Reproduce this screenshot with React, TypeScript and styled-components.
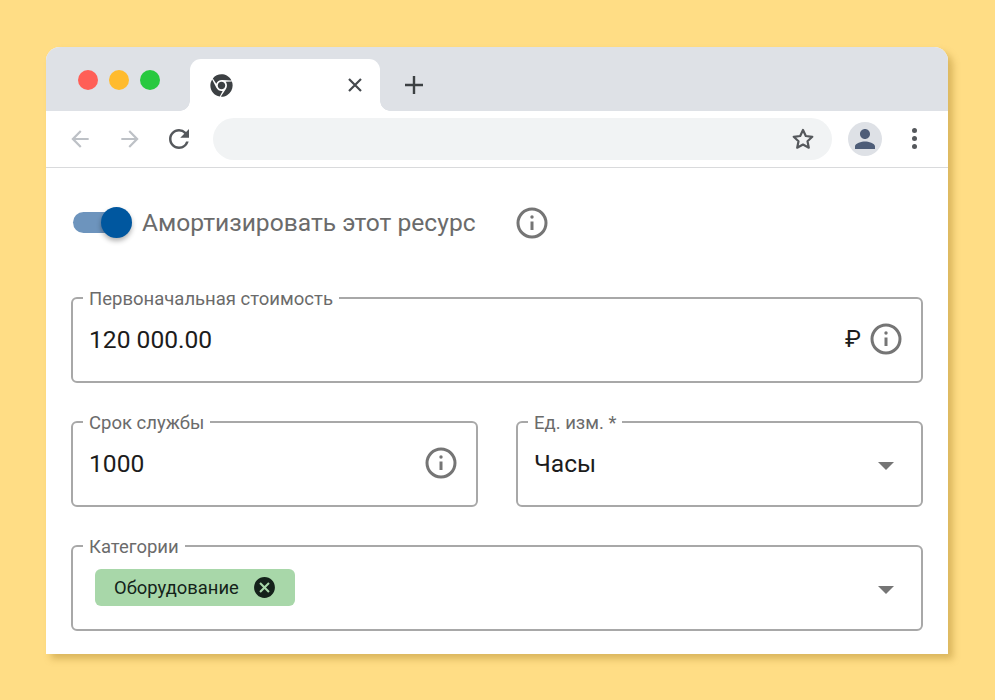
import React from "react"
import styled, { createGlobalStyle } from "styled-components"
import { FaChrome } from "react-icons/fa"
import {
  MdArrowBack,
  MdArrowForward,
  MdCancel,
  MdPerson,
  MdRefresh,
} from "react-icons/md"

const GlobalStyle = createGlobalStyle`
  html, body {
    margin: 0;
    height: 100%;
    background: #ffdd85;
  }
  * {
    box-sizing: border-box;
  }
`

const Page = styled.div`
  width: 995px;
  height: 700px;
  padding: 47px 0 0 46px;
  overflow: hidden;
  font-family: Roboto, "Liberation Sans", sans-serif;
`

const Window = styled.div`
  width: 902px;
  height: 607px;
  border-radius: 14px 14px 0 0;
  background: #fff;
  box-shadow: 5px 5px 7px rgba(150, 110, 20, 0.35);
`

const TabStrip = styled.div`
  height: 64px;
  padding: 12px 0 0 32px;
  display: flex;
  border-radius: 14px 14px 0 0;
  background: #dee1e6;
`

const Lights = styled.div`
  height: 42px;
  display: flex;
  align-items: center;
  gap: 11px;
`

const Light = styled.span<{ $color: string }>`
  width: 20px;
  height: 20px;
  border-radius: 50%;
  background: ${props => props.$color};
`

const Tab = styled.div`
  position: relative;
  width: 190px;
  height: 52px;
  margin-left: 30px;
  padding: 0 15px 0 20px;
  display: flex;
  align-items: center;
  justify-content: space-between;
  border-radius: 11px 11px 0 0;
  background: #fff;

  &::before,
  &::after {
    content: "";
    position: absolute;
    bottom: 0;
    width: 10px;
    height: 10px;
  }
  &::before {
    left: -10px;
    background: radial-gradient(circle at 0 0, #dee1e6 9.5px, #fff 10px);
  }
  &::after {
    right: -10px;
    background: radial-gradient(circle at 100% 0, #dee1e6 9.5px, #fff 10px);
  }
`

const TabLogo = styled(FaChrome)`
  width: 23px;
  height: 23px;
  color: #3c4043;
`

const TabClose = styled.svg`
  width: 20px;
  height: 20px;
  stroke: #45494e;
  stroke-width: 2.2;
`

const NewTab = styled.svg`
  width: 20px;
  height: 20px;
  margin: 16px 0 0 24px;
  stroke: #3c4043;
  stroke-width: 2.4;
`

const Toolbar = styled.div`
  height: 57px;
  padding: 0 0 1px 21px;
  display: flex;
  align-items: center;
  border-bottom: 1px solid #d9dadc;
`

const NavIcon = styled.span<{ $color: string; $gap: number }>`
  width: 26px;
  height: 26px;
  margin-right: ${props => props.$gap}px;
  display: flex;
  color: ${props => props.$color};

  svg {
    width: 100%;
    height: 100%;
  }
`

const Reload = styled(MdRefresh)`
  width: 30px;
  height: 30px;
  margin: 0 19px 0 -2px;
  color: #55585c;
`

const Omnibox = styled.div`
  width: 619px;
  height: 42px;
  padding-right: 17px;
  display: flex;
  align-items: center;
  justify-content: flex-end;
  border-radius: 21px;
  background: #f1f3f4;
`

const Star = styled.svg`
  width: 24px;
  height: 24px;
  fill: none;
  stroke: #55585c;
  stroke-width: 2.2;
  stroke-linejoin: round;
`

const Avatar = styled.div`
  width: 34px;
  height: 34px;
  margin-left: 16px;
  display: flex;
  align-items: center;
  justify-content: center;
  border-radius: 50%;
  background: #dee1e6;
  color: #4e5d78;
  font-size: 30px;
`

const Dots = styled.div`
  margin-left: 30px;
  display: flex;
  flex-direction: column;
  gap: 3px;

  span {
    width: 5px;
    height: 5px;
    border-radius: 50%;
    background: #55585c;
  }
`

const Content = styled.div`
  padding: 39px 25px 0;
`

const SwitchRow = styled.div`
  height: 31px;
  margin-bottom: 59px;
  display: flex;
  align-items: center;
`

const Switch = styled.div`
  position: relative;
  width: 47px;
  height: 21px;
  margin-left: 2px;
  border-radius: 11px;
  background: #6d94bd;

  &::after {
    content: "";
    position: absolute;
    top: -5px;
    right: -12px;
    width: 31px;
    height: 31px;
    border-radius: 50%;
    background: #00579f;
    box-shadow: 0 3px 5px rgba(0, 0, 0, 0.3);
  }
`

const SwitchLabel = styled.span`
  margin-left: 22px;
  font-size: 24.6px;
  color: #6b6b6b;
  white-space: nowrap;
`

const InfoBox = styled.svg<{ $left?: number }>`
  width: 32px;
  height: 32px;
  flex: none;
  margin-left: ${props => props.$left ?? 0}px;
  fill: none;
  stroke: #757575;
`

const Fields = styled.div`
  display: grid;
  grid-template-columns: 407px 407px;
  gap: 38px;
`

const Field = styled.div<{ $wide?: boolean }>`
  position: relative;
  grid-column: ${props => (props.$wide ? "1 / 3" : "auto")};
  height: 86px;
  padding: 0 19px 2px 16px;
  display: flex;
  align-items: center;
  border: 2px solid #a8a8a8;
  border-radius: 6px;
`

const FieldLabel = styled.span`
  position: absolute;
  top: -11px;
  left: 10px;
  padding: 0 6px;
  background: #fff;
  font-size: 18.5px;
  line-height: 22px;
  color: #6b6b6b;
  white-space: nowrap;
`

const Value = styled.span`
  flex: 1;
  font-size: 24.6px;
  color: #1c1c1c;
`

const Unit = styled.span`
  margin-right: 9px;
  font-size: 24px;
  color: #1c1c1c;
`

const Arrow = styled.span`
  width: 0;
  height: 0;
  margin-right: 8px;
  margin-top: 5px;
  border-left: 8px solid transparent;
  border-right: 8px solid transparent;
  border-top: 8px solid #757575;
`

const Chips = styled.div`
  flex: 1;
  padding-left: 6px;
  display: flex;
`

const Chip = styled.div`
  width: 200px;
  height: 37px;
  padding: 0 20px 0 19px;
  display: flex;
  align-items: center;
  justify-content: space-between;
  border-radius: 6px;
  background: #a8d7a9;
  font-size: 18.4px;
  color: #14231a;
`

const ChipClose = styled(MdCancel)`
  width: 25px;
  height: 25px;
  margin-right: -2px;
  color: #14211a;
`

const InfoIcon = ({ left }: { left?: number }) => (
  <InfoBox $left={left} viewBox="0 0 32 32">
    <circle cx="16" cy="16" r="14" strokeWidth="3" />
    <circle cx="16" cy="10" r="1.7" fill="#757575" stroke="none" />
    <path d="M16 14.5v8.5" strokeWidth="3" />
  </InfoBox>
)

export default function App() {
  return (
    <Page>
      <GlobalStyle />
      <Window>
        <TabStrip>
          <Lights>
            <Light $color="#ff5f57" />
            <Light $color="#ffbb2e" />
            <Light $color="#28c93f" />
          </Lights>
          <Tab>
            <TabLogo />
            <TabClose viewBox="0 0 20 20">
              <path d="M4 4l12 12M16 4L4 16" />
            </TabClose>
          </Tab>
          <NewTab viewBox="0 0 20 20">
            <path d="M10 1v18M1 10h18" />
          </NewTab>
        </TabStrip>
        <Toolbar>
          <NavIcon $color="#bdc1c6" $gap={24}>
            <MdArrowBack />
          </NavIcon>
          <NavIcon $color="#bdc1c6" $gap={23}>
            <MdArrowForward />
          </NavIcon>
          <Reload />
          <Omnibox>
            <Star viewBox="0 0 24 24">
              <path d="M12 3l2.8 6 6.5.8-4.8 4.4 1.3 6.5L12 17.5l-5.8 3.2 1.3-6.5-4.8-4.4 6.5-.8z" />
            </Star>
          </Omnibox>
          <Avatar>
            <MdPerson />
          </Avatar>
          <Dots>
            <span />
            <span />
            <span />
          </Dots>
        </Toolbar>
        <Content>
          <SwitchRow>
            <Switch />
            <SwitchLabel>Амортизировать этот ресурс</SwitchLabel>
            <InfoIcon left={40} />
          </SwitchRow>
          <Fields>
            <Field $wide>
              <FieldLabel>Первоначальная стоимость</FieldLabel>
              <Value>120 000.00</Value>
              <Unit>₽</Unit>
              <InfoIcon />
            </Field>
            <Field>
              <FieldLabel>Срок службы</FieldLabel>
              <Value>1000</Value>
              <InfoIcon />
            </Field>
            <Field>
              <FieldLabel>Ед. изм. *</FieldLabel>
              <Value>Часы</Value>
              <Arrow />
            </Field>
            <Field $wide>
              <FieldLabel>Категории</FieldLabel>
              <Chips>
                <Chip>
                  Оборудование
                  <ChipClose />
                </Chip>
              </Chips>
              <Arrow />
            </Field>
          </Fields>
        </Content>
      </Window>
    </Page>
  )
}
